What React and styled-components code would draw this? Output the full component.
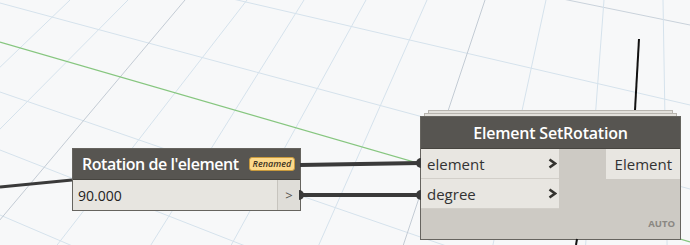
import React from 'react';
import styled, { createGlobalStyle } from 'styled-components';

const GlobalStyle = createGlobalStyle`
    html, body {
        margin: 0;
        padding: 0;
        background: #f7f8f9;
    }
    body {
        font-family: "Open Sans", "Noto Sans", sans-serif;
    }
`;

const Canvas = styled.div`
    position: relative;
    width: 690px;
    height: 245px;
    overflow: hidden;
    background: #f7f8f9;
`;

const Layer = styled.svg`
    position: absolute;
    left: 0;
    top: 0;
    width: 690px;
    height: 245px;
    pointer-events: none;
`;

const Node = styled.div`
    position: absolute;
    left: ${p => p.x}px;
    top: ${p => p.y}px;
    width: ${p => p.w}px;
    display: flex;
    flex-direction: column;
`;

const Stack = styled.div`
    height: 3px;
    margin: 0 ${p => p.inset}px;
    background: #e2e0db;
    border: 1px solid #b7b4ae;
    border-bottom: none;
    box-sizing: border-box;
`;

const Frame = styled.div`
    border: 1px solid #66645f;
    background: #cdcac4;
    display: flex;
    flex-direction: column;
`;

const Header = styled.div`
    height: ${p => p.h}px;
    background: #575551;
    color: #fff;
    display: flex;
    align-items: center;
    justify-content: ${p => (p.center ? 'center' : 'flex-start')};
    padding: 0 ${p => (p.center ? 0 : 9)}px;
    gap: 10px;
    border-bottom: 1px solid #46443f;
`;

const Title = styled.span`
    font-size: 16px;
    font-weight: 600;
    letter-spacing: ${p => (p.tight ? -0.45 : -0.2)}px;
    white-space: nowrap;
`;

const Badge = styled.span`
    flex-shrink: 0;
    height: 12px;
    padding: 0 3px;
    background: #fdd98b;
    border: 1px solid #c99a3c;
    border-radius: 3px;
    color: #3b3122;
    font-size: 9px;
    font-style: italic;
    font-weight: 600;
    line-height: 12px;
`;

const ValueRow = styled.div`
    display: flex;
    height: 30px;
    background: #e7e5e0;
`;

const ValueField = styled.div`
    flex: 1;
    display: flex;
    align-items: center;
    padding-left: 5px;
    font-size: 14px;
    color: #222;
`;

const ValueButton = styled.div`
    width: 22px;
    border-left: 1px solid #c7c4be;
    background: #dfddd8;
    color: #55534f;
    font-size: 13px;
    display: flex;
    align-items: center;
    justify-content: center;
`;

const Body = styled.div`
    display: grid;
    grid-template-columns: 138px 1fr;
    height: 90px;
`;

const Inputs = styled.div`
    display: flex;
    flex-direction: column;
`;

const Port = styled.div`
    height: 29px;
    background: #e8e6e1;
    border-bottom: 1px solid #d2cfc9;
    display: flex;
    align-items: center;
    justify-content: space-between;
    padding: 0 2px 0 6px;
    font-size: 15px;
    color: #333;
`;

const Outputs = styled.div`
    display: flex;
    flex-direction: column;
    align-items: flex-end;
    justify-content: space-between;
`;

const OutPort = styled.div`
    width: 74px;
    height: 30px;
    background: #e8e6e1;
    box-sizing: border-box;
    display: flex;
    align-items: center;
    justify-content: flex-end;
    padding-right: 8px;
    font-size: 15px;
    color: #333;
`;

const Lacing = styled.span`
    font-size: 9.5px;
    font-weight: 700;
    color: #8a8782;
    padding: 0 5px 9px 0;
`;

const Chevron = () => (
    <svg width="9" height="11" viewBox="0 0 9 11">
        <polyline points="1.5,1.5 7,5.5 1.5,9.5" fill="none" stroke="#34332f" strokeWidth="2.6" />
    </svg>
);

// perspective grid: steep lines given by x at y=0 and y=120
const steep = [[70, -55], [128, 9], [185, 84], [247, 154], [304, 229], [366, 300], [427, 374], [485, 445], [546, 520], [604, 595], [663, 665]];
// shallow lines given by y at x=0 and x=690
const shallow = [[-116, 25, '#c9d2db'], [-55, 105, '#d5e2ec'], [3, 189, '#d5e2ec'], [92, 330, '#d5e2ec'], [150, 420, '#d5e2ec'], [215, 510, '#d5e2ec']];

const Grid = () => (
    <Layer>
        {shallow.map(([a, b, c], i) => (
            <line key={'s' + i} x1="0" y1={a} x2="690" y2={b} stroke={c} strokeWidth="1" />
        ))}
        {steep.map(([t, b], i) => {
            const x245 = b + (b - t) * (125 / 120);
            const dark = i === 2 || i === 7;
            return <line key={'v' + i} x1={t} y1="0" x2={x245} y2="245" stroke={dark ? '#c3cbd4' : '#d5e2ec'} strokeWidth="1" />;
        })}
        <line x1="0" y1="42" x2="690" y2="242" stroke="#86c67f" strokeWidth="1.3" />
    </Layer>
);

const Wires = () => (
    <Layer>
        <line x1="0" y1="187" x2="72" y2="180" stroke="#3a3a3a" strokeWidth="3" />
        <line x1="300" y1="165" x2="420" y2="163" stroke="#3a3a3a" strokeWidth="4" />
        <line x1="300" y1="195" x2="420" y2="195" stroke="#3a3a3a" strokeWidth="4" />
        <line x1="639" y1="39" x2="635" y2="110" stroke="#111" strokeWidth="2" />
        <line x1="577" y1="239" x2="576" y2="245" stroke="#111" strokeWidth="2" />
        <path d="M421,158 A5,5 0 0 0 421,168 Z" fill="#3a3a3a" />
        <path d="M421,190 A5,5 0 0 0 421,200 Z" fill="#3a3a3a" />
        <path d="M299,190 A5,5 0 0 1 299,200 Z" fill="#3a3a3a" />
    </Layer>
);

export default function App() {
    return (<Canvas>
        <GlobalStyle />
        <Grid />
        <Node x={72} y={148} w={229}>
            <Frame>
                <Header h={30}>
                    <Title tight>Rotation de l'element</Title>
                    <Badge>Renamed</Badge>
                </Header>
                <ValueRow>
                    <ValueField>90.000</ValueField>
                    <ValueButton>&gt;</ValueButton>
                </ValueRow>
            </Frame>
        </Node>
        <Node x={420} y={110} w={261}>
            <Stack inset={8} />
            <Stack inset={4} />
            <Frame>
                <Header h={31} center>
                    <Title>Element SetRotation</Title>
                </Header>
                <Body>
                    <Inputs>
                        <Port>element<Chevron /></Port>
                        <Port>degree<Chevron /></Port>
                    </Inputs>
                    <Outputs>
                        <OutPort>Element</OutPort>
                        <Lacing>AUTO</Lacing>
                    </Outputs>
                </Body>
            </Frame>
        </Node>
        <Wires />
    </Canvas>);
}
